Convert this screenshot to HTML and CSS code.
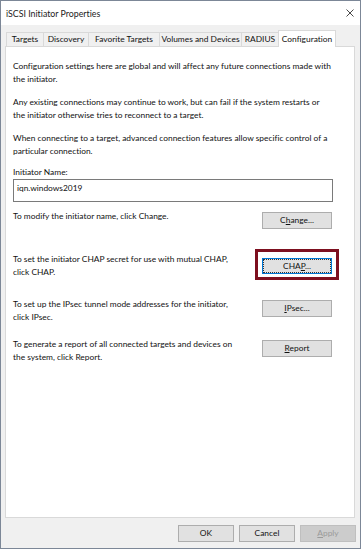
FILE: index.html
```html
<!DOCTYPE html>
<html>
<head>
<meta charset="utf-8">
<link rel="stylesheet" href="styles.css">
</head>
<body>
<div class="window">
  <div class="titlebar">
    <span class="title">iSCSI Initiator Properties</span>
    <svg class="close" width="8" height="8" viewBox="0 0 8 8"><path d="M0.5 0.5 L7.5 7.5 M7.5 0.5 L0.5 7.5" stroke="#333" stroke-width="0.9"/></svg>
  </div>
  <div class="tabs">
    <div class="tab t1">Targets</div>
    <div class="tab t2">Discovery</div>
    <div class="tab t3">Favorite Targets</div>
    <div class="tab t4">Volumes and Devices</div>
    <div class="tab t5">RADIUS</div>
    <div class="tab t6 active">Configuration</div>
  </div>
  <div class="panel">
    <p class="para">Configuration settings here are global and will affect any future connections made with the initiator.</p>
    <p class="para">Any existing connections may continue to work, but can fail if the system restarts or the initiator otherwise tries to reconnect to a target.</p>
    <p class="para">When connecting to a target, advanced connection features allow specific control of a particular connection.</p>
    <div class="label">Initiator Name:</div>
    <div class="input">iqn.windows2019</div>
    <div class="row row-change">
      <div class="rtext">To modify the initiator name, click Change.</div>
      <div class="btn">C<u>h</u>ange...</div>
    </div>
    <div class="row row-chap">
      <div class="rtext">To set the initiator CHAP secret for use with mutual CHAP, click CHAP.</div>
      <div class="hl"><div class="btn focus"><span class="dots">CHA<u>P</u>...</span></div></div>
    </div>
    <div class="row row-ipsec">
      <div class="rtext">To set up the IPsec tunnel mode addresses for the initiator, click IPsec.</div>
      <div class="btn"><u>I</u>Psec...</div>
    </div>
    <div class="row row-report">
      <div class="rtext">To generate a report of all connected targets and devices on the system, click Report.</div>
      <div class="btn"><u>R</u>eport</div>
    </div>
  </div>
  <div class="footer">
    <div class="btn fbtn">OK</div>
    <div class="btn fbtn">Cancel</div>
    <div class="btn fbtn disabled"><u>A</u>pply</div>
  </div>
</div>
</body>
</html>
```
FILE: styles.css
```css
* { box-sizing: border-box; }
html, body { margin: 0; padding: 0; }
body {
  width: 361px;
  height: 549px;
  font-family: Lato, "Open Sans", sans-serif;
  font-size: 8.4px;
  font-variant-ligatures: none;
  color: #111;
  overflow: hidden;
}
.window {
  width: 361px;
  height: 549px;
  border: 1px solid #7c8797;
  background: #f0f0f0;
  display: flex;
  flex-direction: column;
}
.titlebar {
  height: 24px;
  background: #ffffff;
  display: flex;
  align-items: center;
  justify-content: space-between;
  padding: 0 6px 0 5px;
  flex-shrink: 0;
}
.title { font-size: 8.8px; color: #222; }
.close { display: block; }
.tabs {
  display: flex;
  align-items: flex-end;
  padding: 0 0 0 5px;
  height: 16px;
  margin-top: 5px;
  position: relative;
  z-index: 1;
  flex-shrink: 0;
}
.tab {
  height: 14px;
  line-height: 12px;
  border: 1px solid #d9d9d9;
  border-bottom: none;
  margin-right: -1px;
  background: #f0f0f0;
  white-space: nowrap;
  text-align: center;
}
.t1 { width: 38px; }
.t2 { width: 46px; }
.t3 { width: 72px; }
.t4 { width: 83px; }
.t5 { width: 38px; }
.t6 { width: 58px; }
.tab.active {
  height: 17px;
  line-height: 14px;
  padding-top: 1px;
  background: #ffffff;
  margin-bottom: -1px;
}
.panel {
  margin: 0 5px 0 4px;
  height: 472px;
  background: #ffffff;
  border: 1px solid #d9d9d9;
  padding: 13px 22px 0 7px;
  flex-shrink: 0;
}
.para {
  margin: 0 0 10px 0;
  line-height: 13px;
}
.label { margin-top: -2px; line-height: 13px; }
.input {
  height: 23px;
  border: 1px solid #7a7a7a;
  padding: 2px 3px;
  line-height: 13px;
  margin-right: -1px;
}
.row {
  display: flex;
  justify-content: space-between;
  align-items: flex-start;
  line-height: 13px;
}
.rtext { width: 225px; }
.row-change { margin-top: 8px; }
.row-chap { margin-top: 24px; }
.row-ipsec { margin-top: 18px; }
.row-report { margin-top: 14px; }
.btn {
  width: 70px;
  height: 17px;
  background: #e1e1e1;
  border: 1px solid #adadad;
  text-align: center;
  line-height: 15px;
  color: #111;
  flex-shrink: 0;
}
.row-change .btn, .row-ipsec .btn, .row-report .btn { margin-top: 2px; }
.hl {
  border: 3px solid #7d0f1f;
  padding: 6px 4px 3px 4px;
  margin: -4px -7px 0 0;
}
.btn.focus {
  border: 1px solid #0078d7;
  height: 16px;
  padding: 1px;
  line-height: 12px;
}
.dots {
  display: block;
  outline: 1px dotted #333;
  height: 12px;
}
.footer {
  display: flex;
  justify-content: flex-end;
  gap: 5px;
  padding: 7px 4px 0 0;
}
.fbtn { width: 56px; }
.btn.disabled {
  background: #cccccc;
  border-color: #bfbfbf;
  color: #9a9a9a;
}
u { text-decoration: underline; }
```
